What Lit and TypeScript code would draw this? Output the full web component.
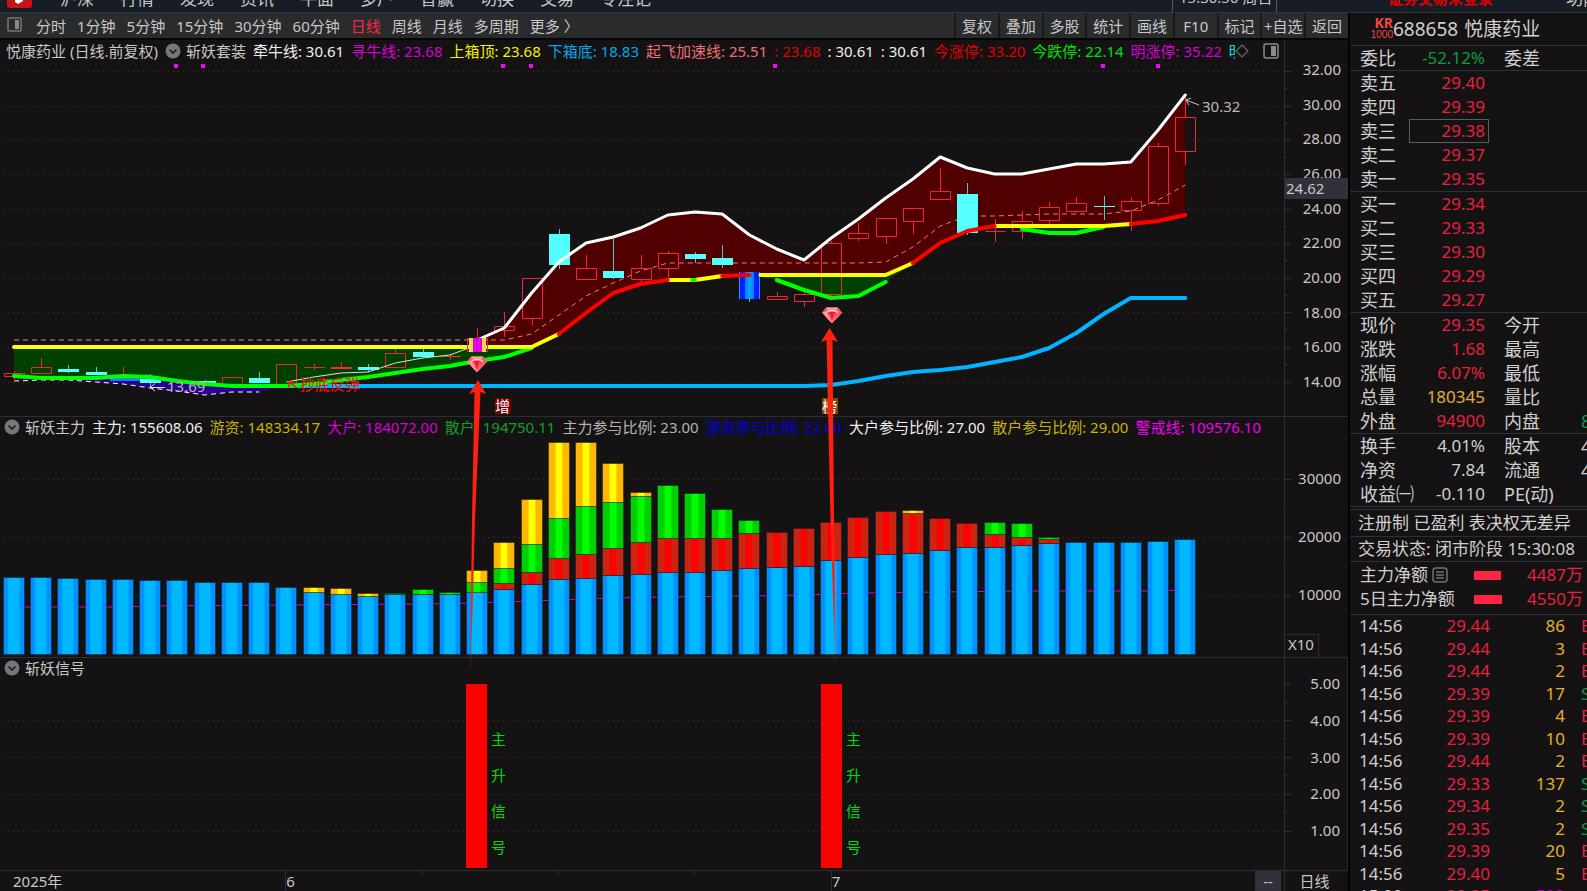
import { LitElement, html, svg, css } from "lit";
import { customElement } from "lit/decorators.js";
import { classMap } from "lit/directives/class-map.js";

type Pt = [number, number];
type Item = [string, string];

const MENU = ["沪深", "行情", "发现", "资讯", "平面", "多户", "智赢", "切换", "交易", "专注记"];
const PERIODS = ["分时", "1分钟", "5分钟", "15分钟", "30分钟", "60分钟", "日线", "周线", "月线", "多周期", "更多 〉"];
const TOOLS = ["复权", "叠加", "多股", "统计", "画线", "F10", "标记", "+自选", "返回"];

const PRICE_INFO: Item[] = [
  ["牵牛线: 30.61", "c-white"], ["寻牛线: 23.68", "c-violet"], ["上箱顶: 23.68", "c-yellow"],
  ["下箱底: 18.83", "c-sky"], ["起飞加速线: 25.51", "c-salmon"], [": 23.68", "c-red"], [": 30.61", "c-white"],
  [": 30.61", "c-white"], ["今涨停: 33.20", "c-red"], ["今跌停: 22.14", "c-lime"], ["明涨停: 35.22", "c-violet"],
];
const VOLUME_INFO: Item[] = [
  ["主力: 155608.06", "c-white"], ["游资: 148334.17", "c-gold"], ["大户: 184072.00", "c-violet"],
  ["散户: 194750.11", "c-green"], ["主力参与比例: 23.00", "c-grey"], ["游资参与比例: 22.00", "c-blue"],
  ["大户参与比例: 27.00", "c-white"], ["散户参与比例: 29.00", "c-gold"], ["警戒线: 109576.10", "c-magenta"],
];

/* centre of the k-th trading day */
const X = (k: number) => 14 + 27.24 * k;

/* day, type (r hollow red, s solid red, c cyan), body top, body bottom, wick top, wick bottom */
const CANDLES: [number, string, number, number, number, number][] = [
  [0, "r", 373, 376, 371, 382], [1, "r", 367, 373, 358, 373], [2, "c", 369, 372, 365, 373], [3, "c", 372, 375, 367, 375],
  [4, "r", 376, 376, 367, 376], [5, "c", 379, 383, 374, 388], [7, "c", 381, 383, 380, 383], [8, "r", 377, 384, 377, 384],
  [9, "c", 378, 383, 372, 383], [10, "r", 364, 384, 364, 384], [11, "r", 367, 367, 364, 370], [12, "s", 367, 369, 362, 369],
  [13, "c", 367, 370, 364, 372], [14, "r", 353, 367, 348, 367], [15, "c", 352, 357, 348, 358], [16, "s", 356, 357, 354, 360],
  [18, "r", 326, 330, 312, 337], [19, "r", 278, 318, 278, 325], [20, "c", 234, 265, 229, 269], [21, "r", 268, 279, 255, 279],
  [22, "c", 271, 278, 239, 279], [23, "r", 268, 279, 255, 282], [24, "r", 253, 268, 251, 278], [25, "c", 254, 259, 252, 263],
  [26, "c", 258, 265, 245, 268], [28, "r", 296, 299, 292, 299], [29, "r", 294, 301, 292, 307], [30, "r", 243, 294, 241, 298],
  [31, "r", 233, 238, 223, 241], [32, "r", 218, 236, 218, 244], [33, "r", 208, 221, 208, 234], [34, "r", 191, 199, 168, 200],
  [35, "c", 194, 233, 183, 235], [36, "r", 231, 231, 219, 242], [37, "r", 221, 231, 211, 239], [38, "r", 207, 220, 202, 225],
  [39, "r", 203, 211, 197, 213], [40, "c", 206, 207, 196, 220], [41, "r", 201, 210, 197, 231], [42, "r", 146, 203, 143, 206],
  [43, "r", 117, 151, 97, 165],
];

const UPPER: Pt[] = [[17, 340], [18, 328], [19, 293], [20, 262], [21, 243], [22, 237], [23, 228], [24, 215], [25, 212], [26, 214], [27, 235], [28, 249], [29, 260], [30, 238], [31, 219], [32, 198], [33, 179], [34, 157], [35, 168], [36, 174], [37, 174], [38, 169], [39, 164], [40, 164], [41, 162], [42, 130], [43, 95]];
const BASE: Pt[] = [[0, 347], [19, 347], [20, 334], [21, 313], [22, 293], [23, 284], [24, 280], [25, 280], [26, 276], [27, 275], [28, 275], [32, 275], [33, 263], [34, 243], [35, 231], [36, 226], [40, 226], [41, 224], [42, 221], [43, 215]];
const GREEN1: Pt[] = [[0, 376], [1, 378], [3, 378], [4, 376], [5, 377], [6, 381], [7, 384], [8, 386], [10, 386], [11, 384], [12, 380], [13, 377], [14, 373], [15, 369], [16, 366], [17, 361], [18, 357], [19, 348]];
const GREEN2: Pt[] = [[28, 280], [29, 290], [30, 298], [31, 296], [32, 282]];
const GREEN3: Pt[] = [[37, 229], [38, 233], [39, 233], [40, 227]];
const BOTTOM: Pt[] = [[10, 386], [29, 386], [30, 385], [31, 381], [32, 376], [33, 372], [34, 370], [35, 367], [36, 362], [37, 357], [38, 348], [39, 333], [40, 314], [41, 298], [43, 298]];
const MID: Pt[] = [[0, 340], [18, 340], [19, 334], [20, 315], [21, 296], [22, 283], [23, 271], [24, 263], [31, 263], [32, 262], [33, 247], [34, 226], [35, 216], [36, 216], [37, 215], [38, 214], [40, 214], [41, 211], [42, 200], [43, 185]];
const LOW: Pt[] = [[0, 381], [1, 380], [2, 380], [3, 382], [4, 384], [5, 388], [6, 391], [7, 395], [8, 392], [9, 392]];
const THIN: Pt[] = [[10, 382], [11, 377], [12, 373], [13, 372], [14, 363], [15, 358], [16, 355], [17, 345]];

/* tops of the blue, red, green and yellow parts of each bar */
const BARS: number[][] = [
  [578], [578], [579], [580], [580], [581], [581], [583], [583], [583], [588],
  [593, 593, 593, 588], [595, 595, 595, 589], [597, 597, 597, 594], [595, 595, 594], [595, 595, 590], [595, 595, 593],
  [593, 593, 583, 571], [590, 584, 569, 543], [585, 573, 545, 500], [580, 559, 519, 443], [579, 555, 507, 443],
  [576, 549, 503, 464], [575, 543, 497, 493], [573, 539, 486], [573, 539, 494], [571, 539, 510], [569, 534, 521],
  [568, 533], [567, 529], [561, 523], [558, 518], [555, 512], [554, 514, 514, 511], [551, 519], [548, 524],
  [548, 535, 523], [546, 538, 524], [544, 540, 538], [543], [543], [543], [542], [540],
];
const WARN: Pt[] = [[0, 607], [4, 607], [5, 606], [10, 605], [15, 604], [17, 603], [18, 602], [20, 600], [22, 598], [24, 597], [27, 596], [29, 595], [31, 593], [34, 592], [37, 591], [42, 591], [43, 590]];

const line = (pts: Pt[]) => pts.map(([k, y]) => `${X(k).toFixed(1)},${y}`).join(" ");
const part = (pts: Pt[], from: number, to: number) => line(pts.filter(([k]) => k >= from && k <= to));
const area = (top: Pt[], bottom: Pt[]) => `${line(top)} ${line([...bottom].reverse())}`;

const SELLS = [["卖五", "29.40"], ["卖四", "29.39"], ["卖三", "29.38"], ["卖二", "29.37"], ["卖一", "29.35"]];
const BUYS = [["买一", "29.34"], ["买二", "29.33"], ["买三", "29.30"], ["买四", "29.29"], ["买五", "29.27"]];
const STATS = [
  ["现价", "29.35", "up", "今开", "", ""], ["涨跌", "1.68", "up", "最高", "", ""], ["涨幅", "6.07%", "up", "最低", "", ""],
  ["总量", "180345", "vol", "量比", "", ""], ["外盘", "94900", "up", "内盘", "85445", "down"],
];
const FUND = [
  ["换手", "4.01%", "", "股本", "4.50亿", ""], ["净资", "7.84", "", "流通", "4.50亿", ""], ["收益㈠", "-0.110", "", "PE(动)", "", ""],
];
const TRADES = [
  ["14:56", "29.44", "86", "B"], ["14:56", "29.44", "3", "B"], ["14:56", "29.44", "2", "B"], ["14:56", "29.39", "17", "S"],
  ["14:56", "29.39", "4", "B"], ["14:56", "29.39", "10", "B"], ["14:56", "29.44", "2", "B"], ["14:56", "29.33", "137", "S"],
  ["14:56", "29.34", "2", "S"], ["14:56", "29.35", "2", "S"], ["14:56", "29.39", "20", "B"], ["14:56", "29.40", "5", "B"],
  ["15:00", "29.35", "522", ""],
];

const FONT = css`
  font-family: "Noto Sans", "Noto Sans CJK SC", sans-serif;
`;

const palette = css`
  .c-text { color: #c8c8c8; }
  .c-white { color: #f0f0f0; }
  .c-grey { color: #b4b4b4; }
  .c-violet { color: #d400d4; }
  .c-magenta { color: #f000f0; }
  .c-yellow { color: #f0f000; }
  .c-gold { color: #c8b400; }
  .c-sky { color: #00a8ea; }
  .c-salmon { color: #f07070; }
  .c-red { color: #e00000; }
  .c-lime { color: #00e000; }
  .c-green { color: #10a028; }
  .c-blue { color: #0000e0; }
`;

@customElement("chart-panels")
export class ChartPanels extends LitElement {
  static styles = [palette, css`
    :host { display: flex; flex-direction: column; min-height: 0; ${FONT} font-size: 15px; line-height: 20px; color: #c8c8c8; }
    .panel { display: grid; grid-template-columns: minmax(0, 1fr) 64px; min-height: 0; }
    .panel + .panel { box-shadow: inset 0 1px #2b2e36; }
    .price { flex: 376 1 0; }
    .volume { flex: 241 1 0; }
    .signal { flex: 213 1 0; }
    .plot { display: flex; flex-direction: column; min-width: 0; min-height: 0; }
    .info { display: flex; align-items: center; gap: 7px; height: 20px; margin-top: 1px; padding: 0 5px 0 4px; white-space: nowrap; }
    .price .info { height: 22px; margin-top: 0; padding-left: 6px; }
    .title { display: flex; align-items: center; gap: 5px; }
    .fold { display: block; width: 16px; height: 16px; padding: 0; border: 0; background: none; }
    .fold svg, .layout svg { display: block; }
    .clip { width: 9px; overflow: hidden; color: #00e0e0; }
    .spacer { flex: 1; }
    .mark { display: flex; align-items: center; gap: 7px; margin-left: -7px; }
    .layout { display: block; padding: 0; border: 0; background: none; }
    .canvas { display: block; flex: 1; width: 100%; min-height: 0; overflow: visible; pointer-events: none; }
    .price .canvas { position: relative; z-index: 1; }
    .axis { position: relative; display: flex; flex-direction: column; justify-content: space-between; text-align: right; border-left: 1px solid #2b2e36; box-sizing: border-box; }
    .price .axis { padding: 19px 7px 25px 0; }
    .volume .axis { padding: 52px 7px 53px 0; }
    .signal .axis { padding: 16px 7px 30px 0; border-right: 1px solid #2b2e36; }
    .tag { position: absolute; left: 0; right: 0; top: 138px; height: 21px; background: #32313b; text-align: left; padding-left: 1px; }
    .unit { position: absolute; left: 0; bottom: 0; padding: 0 4px 2px 3px; height: 20px; border: 1px solid #2b2e36; border-bottom: 0; border-left: 0; line-height: 18px; }
    .grid { stroke: #35353a; stroke-width: 1; stroke-dasharray: 1 4; }
    .tick { stroke: #2f333c; stroke-width: 1; }
    .up { fill: none; stroke: #f0243f; stroke-width: 1; }
    .solid { fill: #ff2442; }
    .down { fill: #54ffff; }
    .wickdown { stroke: #40d0d0; stroke-width: 1; }
    .thick { fill: none; stroke-width: 4; stroke-linejoin: round; stroke-linecap: round; }
    .white { stroke: #ffffff; stroke-width: 3; }
    .yellow { stroke: #ffff00; }
    .red { stroke: #ff0000; }
    .green { stroke: #00ff00; }
    .sky { stroke: #00b4ff; }
    .dash { fill: none; stroke: #e08080; stroke-width: 1; stroke-dasharray: 5 4; }
    .low { fill: none; stroke: #ffffff; stroke-width: 1; stroke-dasharray: 5 4; }
    .thin { fill: none; stroke: #e0e0e0; stroke-width: 1; }
    .warn { fill: none; stroke: #d000d0; stroke-width: 1; }
    .note { fill: #b8b8b8; }
    .rebound { fill: #ff1010; }
    .badge { fill: #ffffff; }
    .sig { fill: #00dc00; }
    .bar { stroke: #10202c; stroke-width: 1; stroke-opacity: 0.5; }
  `];

  private fold(label: string) {
    return html`<button class="fold" aria-label=${label}>
      <svg width="16" height="16" viewBox="0 0 16 16"><circle cx="8" cy="8" r="7.5" fill="#77777a" /><path d="M4.5 6.5 8 10l3.5-3.5" fill="none" stroke="#1c1c1e" stroke-width="1.6" /></svg>
    </button>`;
  }

  private grid(ys: number[], minor: number) {
    return ys.map((y, i) => svg`
      <line class="grid" x1="3" x2="1282" y1=${y + 0.5} y2=${y + 0.5} />
      <line class="tick" x1="1284" x2="1291" y1=${y + 0.5} y2=${y + 0.5} />
      ${i < ys.length - 1 ? svg`<line class="tick" x1="1284" x2="1287" y1=${y + minor} y2=${y + minor} />` : null}`);
  }

  private candle([k, type, top, bottom, high, low]: [number, string, number, number, number, number]) {
    const x = Math.round(X(k)) + 0.5;
    if (type === "c") {
      return svg`<line class="wickdown" x1=${x} x2=${x} y1=${high} y2=${low} /><rect class="down" x=${x - 10.5} y=${top} width="21" height=${bottom - top} />`;
    }
    if (type === "s") {
      return svg`<line class="up" x1=${x} x2=${x} y1=${high} y2=${low} /><rect class="solid" x=${x - 10.5} y=${top} width="21" height=${bottom - top} />`;
    }
    return svg`<path class="up" d="M${x} ${high}V${top}M${x} ${bottom}V${low}M${x - 10} ${top + 0.5}H${x + 10}V${bottom + 0.5}H${x - 10}Z" />`;
  }

  private gem(cx: number, top: number) {
    return svg`<g transform="translate(${cx} ${top})">
      <path d="M-6-.5H6L10 4.5 0 15.500-10 4.500Z" fill="#ff5a64" />
      <path d="M-6-.5H6L4 2.500H-4ZM-10 4.500-5 4 0 15.500Z" fill="#ff9c9c" />
      <path d="M-4.500 3.500 0 2.500 4.500 3.500 0 14Z" fill="#f01830" />
      <path d="M-6 4.500-3 3 0 2.500 3 3 6 4.500" fill="none" stroke="#ffdcdc" stroke-width="1.300" />
      <path d="M-3 4.500 0 14 3 4.500M10 4.500 0 15" fill="none" stroke="#ff7a80" stroke-width=".8" />
    </g>`;
  }

  private price() {
    const c = Math.round(X(17)) + 0.5, b = Math.round(X(27)) + 0.5;
    return svg`<svg class="canvas" viewBox="0 62 1284 354" preserveAspectRatio="xMinYMin meet">
      <defs>
        <linearGradient id="fade" x1="0" x2="0" y1="0" y2="1">
          <stop offset="0" stop-color="#ff2010" /><stop offset=".8" stop-color="#ff2010" /><stop offset="1" stop-color="#ff2010" stop-opacity=".25" />
        </linearGradient>
        <linearGradient id="hot">
          <stop offset="0" stop-color="#e6dc50" /><stop offset=".22" stop-color="#e6dc50" /><stop offset=".22" stop-color="#e000c0" /><stop offset=".4" stop-color="#ff00ff" /><stop offset=".46" stop-color="#9000c0" /><stop offset=".54" stop-color="#ff00ff" /><stop offset=".74" stop-color="#e000c0" /><stop offset=".74" stop-color="#e6dc50" /><stop offset="1" stop-color="#e6dc50" />
        </linearGradient>
        <linearGradient id="cold">
          <stop offset="0" stop-color="#40e0ff" /><stop offset=".06" stop-color="#0020ff" /><stop offset=".28" stop-color="#0020ff" /><stop offset=".3" stop-color="#0080ff" /><stop offset=".5" stop-color="#00a8ff" /><stop offset=".7" stop-color="#0080ff" /><stop offset=".72" stop-color="#0020ff" /><stop offset=".94" stop-color="#0020ff" /><stop offset="1" stop-color="#40e0ff" />
        </linearGradient>
      </defs>
      ${this.grid([71, 106, 140, 174, 209, 243, 278, 312, 347, 382], 17.5)}
      ${[176, 203, 503, 531, 775, 1103, 1158].map((x) => svg`<rect x=${x - 2} y="64" width="4" height="4" fill="#ff00ff" />`)}
      <polygon fill="#500000" points=${area(UPPER, [[17, 347], ...BASE.slice(1)])} />
      <polygon fill="#004000" points=${area([[0, 347], [19, 347]], GREEN1)} />
      <polygon fill="#004000" points=${area([[27, 275], [32, 275], [33, 263]], GREEN2)} />
      <polygon fill="#004000" points=${area([[36.5, 226], [40, 226]], GREEN3)} />
      <polygon fill="#2c0090" points=${area([[1, 379], [3, 379], [4, 377], [5, 377], [6, 381], [7, 384], [8, 386], [10, 386]], LOW.slice(1))} />
      <rect x="110" y="378" width="32" height="3" fill="#1484f0" />
      <polyline class="dash" points=${line(MID)} />
      <polyline class="low" points=${line(LOW)} />
      <polyline class="thick sky" points=${line(BOTTOM)} />
      ${CANDLES.map((d) => this.candle(d))}
      <rect x=${b - 10.5} y="272" width="21" height="27" fill="url(#cold)" />
      <line class="wickdown" x1=${b} x2=${b} y1="299" y2="302" />
      <polyline class="thick green" points=${line(GREEN1)} />
      <polyline class="thick green" points=${line(GREEN2)} />
      <polyline class="thick green" points=${line(GREEN3)} />
      <polyline class="thick yellow" points=${part(BASE, 0, 20)} />
      <polyline class="thick yellow" points=${part(BASE, 24, 26)} />
      <polyline class="thick yellow" points=${line([[27.4, 275], [32, 275], [33, 263]])} />
      <polyline class="thick yellow" points=${part(BASE, 36, 41)} />
      <polyline class="thick red" points=${part(BASE, 20, 24)} />
      <polyline class="thick red" points=${part(BASE, 26, 27)} />
      <polyline class="thick red" points=${part(BASE, 33, 36)} />
      <polyline class="thick red" points=${part(BASE, 41, 43)} />
      <path class="thick green" d="M692 280h3" />
      <polyline class="thin" points=${line(THIN)} />
      <polyline class="thick white" points=${line(UPPER)} />
      <line class="up" x1=${c} x2=${c} y1="328" y2="338" />
      <rect class="up" x=${c - 10} y="338.500" width="20" height="13" />
      <rect x=${c - 8.5} y="338" width="17" height="14" fill="url(#hot)" />
      ${this.gem(477, 357)} ${this.gem(832, 308)}
      <path d="M165 387.500H150M155 383.500 150 387.500 155 391" fill="none" stroke="#d0d0d0" />
      <text class="note" x="167" y="392">13.69</text>
      <path d="M297 388 289 382M289 387V382H295" fill="none" stroke="#ff1010" stroke-width="1.500" />
      <text class="rebound" x="300" y="390">抄底反弹</text>
      <path d="M1199 105 1186 100M1191 98 1186 100 1189 105" fill="none" stroke="#c8c8c8" />
      <text class="note" x="1202" y="112">30.32</text>
      <rect x="495" y="398" width="16" height="16" fill="#780000" /><text class="badge" x="495" y="412">增</text>
      <rect x="822" y="398" width="16" height="16" fill="#8a4600" /><text class="badge" x="822" y="412">榜</text>
      <path fill="url(#fade)" d="M478 380 486 394 480.500 392 475 520 470.900 669H470.100L472 520 474.500 392 469 394Z" />
      <path fill="url(#fade)" d="M829.500 328 838 342 832.500 340 834 520 835.900 662H835.100L830.500 520 826.500 340 821 342Z" />
    </svg>`;
  }

  private volume() {
    const fills = ["url(#b)", "url(#r)", "url(#g)", "url(#y)"];
    const stops: Record<string, [string, string]> = { b: ["#0090ff", "#00b8ff"], r: ["#cc2410", "#ff0000"], g: ["#00d000", "#00ff00"], y: ["#ffb800", "#ffff00"] };
    return svg`<svg class="canvas" viewBox="0 437 1284 220" preserveAspectRatio="xMinYMin meet">
      <defs>${Object.entries(stops).map(([id, [edge, mid]]) => {
        const [s, e] = id === "b" ? [0.18, 0.72] : [0.3, 0.62];
        return svg`<linearGradient id=${id}>
          <stop offset=${s} stop-color=${edge} /><stop offset=${s + 0.08} stop-color=${mid} /><stop offset=${e} stop-color=${mid} /><stop offset=${e + 0.08} stop-color=${edge} />
        </linearGradient>`;
      })}</defs>
      ${this.grid([479, 537, 596], 29)}
      <polyline class="warn" points=${line(WARN)} />
      ${BARS.map((tops, k) => tops.map((top, i) => {
        const bottom = i ? tops[i - 1] : 655;
        return bottom > top ? svg`<rect class="bar" x=${Math.round(X(k)) - 10.5} y=${top - 0.5} width="21" height=${bottom - top} fill=${fills[i]} />` : null;
      }))}
    </svg>`;
  }

  private signal() {
    return svg`<svg class="canvas" viewBox="0 678 1284 192" preserveAspectRatio="xMinYMin meet">
      ${this.grid([720, 757, 794, 831], 18.5)}
      <line class="tick" x1="1284" x2="1291" y1="684.5" y2="684.5" /><line class="tick" x1="1284" x2="1287" y1="702.5" y2="702.5" />
      ${[466, 821].map((x) => svg`<rect x=${x} y="684" width="21" height="184" fill="#ff0000" />
        ${["主", "升", "信", "号"].map((ch, i) => svg`<text class="sig" x=${x + 25} y=${745 + i * 36}>${ch}</text>`)}`)}
    </svg>`;
  }

  private items(list: Item[]) {
    return list.map(([t, c]) => html`<span class=${c}>${t}</span>`);
  }

  render() {
    return html`
      <section class="panel price">
        <div class="plot">
          <div class="info">
            <span>悦康药业 (日线.前复权)</span>
            <span class="title">${this.fold("斩妖套装")}<span>斩妖套装</span></span>
            ${this.items(PRICE_INFO)}
            <span class="clip">明</span>
            <span class="mark"><svg width="14" height="14" viewBox="0 0 14 14"><path d="M7 1 13 7 7 13 1 7Z" fill="none" stroke="#6a6a6c" stroke-width="1.2" /></svg></span>
            <span class="spacer"></span>
            <button class="layout" aria-label="布局"><svg width="16" height="16" viewBox="0 0 16 16"><rect x="1" y="1" width="14" height="14" rx="2" fill="none" stroke="#8a8a8c" stroke-width="1.5" /><rect x="8" y="3" width="5" height="10" fill="#8a8a8c" /></svg></button>
          </div>
          ${this.price()}
        </div>
        <div class="axis">${["32.00", "30.00", "28.00", "26.00", "24.00", "22.00", "20.00", "18.00", "16.00", "14.00"].map((v) => html`<span>${v}</span>`)}<span class="tag">24.62</span></div>
      </section>
      <section class="panel volume">
        <div class="plot">
          <div class="info"><span class="title">${this.fold("斩妖主力")}<span>斩妖主力</span></span>${this.items(VOLUME_INFO)}</div>
          ${this.volume()}
        </div>
        <div class="axis">${["30000", "20000", "10000"].map((v) => html`<span>${v}</span>`)}<span class="unit">X10</span></div>
      </section>
      <section class="panel signal">
        <div class="plot">
          <div class="info"><span class="title">${this.fold("斩妖信号")}<span>斩妖信号</span></span></div>
          ${this.signal()}
        </div>
        <div class="axis">${["5.00", "4.00", "3.00", "2.00", "1.00"].map((v) => html`<span>${v}</span>`)}</div>
      </section>`;
  }
}

@customElement("quote-panel")
export class QuotePanel extends LitElement {
  static styles = css`
    :host { display: block; overflow: hidden; background: #141213; ${FONT} font-size: 18px; line-height: 24px; color: #cfcfcf; }
    .head { display: flex; align-items: center; height: 32px; padding-left: 20px; border-bottom: 1px solid #2e3038; font-size: 19px; white-space: nowrap; }
    .flags { width: 23px; text-align: right; color: #f04848; font-size: 14px; line-height: 12px; }
    .flags b { display: block; }
    .flags small { display: block; font-family: "Liberation Sans", sans-serif; font-size: 10px; line-height: 12px; }
    .name { margin-left: 6px; }
    table { table-layout: fixed; border-collapse: collapse; width: 320px; border-bottom: 1px solid #2e3038; }
    td, th { height: 24px; padding: 0; font-weight: normal; text-align: left; white-space: nowrap; }
    th { padding-left: 10px; }
    .lab { width: 59px; }
    .val { width: 80px; }
    .lab2 { width: 92px; }
    .num { text-align: right; font-size: 17px; }
    .num span { display: block; line-height: 22px; padding-right: 3px; border: 1px solid transparent; }
    .num .picked { border-color: #5c5c60; }
    .next { padding-left: 15px; }
    .up { color: #e8213c; }
    .down { color: #109a40; }
    .vol { color: #e0b030; }
    .purple { color: #a000b0; }
    .last { border-bottom: 4px double #2e3038; }
    .line { padding-left: 8px; height: 26px; line-height: 26px; font-size: 17px; border-bottom: 1px solid #2e3038; white-space: nowrap; }
    .line.low { height: 24px; line-height: 24px; }
    .flow { padding: 1px 4px 3px 10px; border-bottom: 1px solid #2e3038; font-size: 17px; }
    .row { display: grid; grid-template-columns: 114px 1fr auto; align-items: center; white-space: nowrap; }
    .row > span:first-child { display: flex; align-items: center; gap: 4px; }
    .meter { height: 9px; background: #ff2442; }
    .trades { border: 0; font-size: 17px; line-height: 22px; }
    .trades td { height: 22px; }
    .trades tr:nth-child(even) td { height: 23px; }
    .trades td:first-child { padding-left: 9px; }
    .time { width: 70px; }
    .deal { width: 70px; }
    .qty { width: 75px; }
    .right { text-align: right; }
    .side { padding-left: 16px; }
  `;

  private book(rows: string[][]) {
    return html`<table><colgroup><col class="lab" /><col class="val" /><col /></colgroup>
      <tbody>${rows.map(([l, v]) => html`<tr><th scope="row">${l}</th><td class="num up"><span class=${classMap({ picked: v === "29.38" })}>${v}</span></td><td></td></tr>`)}</tbody></table>`;
  }

  private stats(rows: string[][], last = false) {
    return html`<table class=${classMap({ last })}><colgroup><col class="lab" /><col class="val" /><col class="lab2" /><col /></colgroup>
      <tbody>${rows.map(([l, v, c, l2, v2, c2]) => html`<tr><th scope="row">${l}</th><td class="num ${c}"><span>${v}</span></td><td class="next">${l2}</td><td class=${c2}>${v2}</td></tr>`)}</tbody></table>`;
  }

  render() {
    return html`
      <div class="head"><span class="flags"><b>KR</b><small>1000</small></span><span>688658</span><span class="name">悦康药业</span></div>
      ${this.stats([["委比", "-52.12%", "down", "委差", "", ""]])}
      ${this.book(SELLS)} ${this.book(BUYS)} ${this.stats(STATS)} ${this.stats(FUND, true)}
      <div class="line">注册制 已盈利 表决权无差异</div>
      <div class="line low">交易状态: 闭市阶段 15:30:08</div>
      <div class="flow">
        <div class="row"><span>主力净额<svg width="16" height="16" viewBox="0 0 16 16"><rect x="1" y="1" width="14" height="14" rx="3" fill="none" stroke="#707072" stroke-width="1.5" /><path d="M4 5h8M4 8h8M4 11h8" stroke="#707072" stroke-width="1.300" /></svg></span><span class="meter" style="width:27px"></span><span class="up">4487万</span></div>
        <div class="row"><span>5日主力净额</span><span class="meter" style="width:28px"></span><span class="up">4550万</span></div>
      </div>
      <table class="trades"><colgroup><col class="time" /><col class="deal" /><col class="qty" /><col /></colgroup>
        <tbody>${TRADES.map(([t, p, q, s]) => html`<tr><td>${t}</td><td class="up right">${p}</td><td class="right ${s ? "vol" : "purple"}">${q}</td><td class="side ${s === "S" ? "down" : "up"}">${s}</td></tr>`)}</tbody>
      </table>`;
  }
}

@customElement("app-root")
export class AppRoot extends LitElement {
  static styles = css`
    :host { display: grid; grid-template-columns: minmax(0, 1fr) 239px; grid-template-rows: 13px minmax(0, 1fr); height: 100vh; overflow: hidden; background: #141213; ${FONT} font-size: 15px; line-height: 20px; color: #c8c8c8; }
    button { font: inherit; color: inherit; border: 0; padding: 0; background: none; white-space: nowrap; }
    .top { grid-column: 1 / -1; display: flex; align-items: flex-end; height: 12px; overflow: hidden; background: #171d26; border-bottom: 1px solid #30343d; }
    .logo { display: block; margin-left: 7px; margin-bottom: 4px; }
    .menu { display: flex; gap: 26px; margin-left: 28px; padding-bottom: 3px; font-size: 17px; flex: 1; }
    .clock { height: 12px; display: flex; align-items: flex-end; width: 105px; box-sizing: border-box; border: solid #55585f; border-width: 0 1px; padding: 0 0 5px 6px; white-space: nowrap; }
    .login { margin-left: 111px; padding-bottom: 4px; color: #e00000; font-weight: bold; }
    .skill { margin-left: 73px; width: 21px; overflow: hidden; white-space: nowrap; padding-bottom: 3px; font-size: 17px; }
    .main { display: flex; flex-direction: column; min-width: 0; min-height: 0; }
    .bar { display: flex; align-items: center; height: 25px; border-bottom: 2px solid #050505; background: #2a2b2d; }
    .side { display: block; margin: 0 14px 0 7px; }
    .periods { display: flex; gap: 11px; flex: 1; }
    .on { color: #ff2442; }
    .tools { display: grid; grid-template-columns: repeat(9, minmax(0, 1fr)); width: 394px; height: 100%; }
    .tools button { border-left: 2px solid #18181a; overflow: hidden; }
    chart-panels { flex: 1; }
    .foot { display: grid; grid-template-columns: minmax(0, 1fr) 26px 3px 64px; height: 20px; border-top: 1px solid #2b2e36; }
    .dates { display: grid; grid-template-columns: 285fr 545fr 424fr; }
    .dates span { border-left: 1px solid #2b2e36; background: linear-gradient(#2b2e36, #2b2e36) 25% 0 / 1px 4px no-repeat, linear-gradient(#2b2e36, #2b2e36) 50% 0 / 1px 4px no-repeat, linear-gradient(#2b2e36, #2b2e36) 75% 0 / 1px 4px no-repeat; }
    .dates .year { padding-left: 13px; border: 0; background: none; }
    .dates .month { background: none; }
    .dash { background: #32313b; text-align: center; }
    .mode { grid-column: 4; padding-right: 4px; text-align: center; border-left: 1px solid #2b2e36; }
    quote-panel { border-left: 2px solid #000; }
  `;

  render() {
    return html`
      <header class="top">
        <svg class="logo" width="25" height="20" viewBox="0 0 25 20"><rect width="25" height="20" rx="3" fill="#c81414" /><path d="M8 8h8v5l-5 3-3-2Z" fill="#fff" /></svg>
        <nav class="menu">${MENU.map((m) => html`<button>${m}</button>`)}</nav>
        <span class="clock">15:30:50 周日</span>
        <span class="login">证券交易未登录</span>
        <span class="skill">功能</span>
      </header>
      <main class="main">
        <div class="bar">
          <button class="side" aria-label="侧栏"><svg width="15" height="15" viewBox="0 0 15 15"><rect x="1" y="1" width="13" height="13" rx="1" fill="none" stroke="#77787a" stroke-width="1.5" /><rect x="8" y="3" width="4" height="9" fill="#8a8a8c" /></svg></button>
          <nav class="periods">${PERIODS.map((p) => html`<button class=${classMap({ on: p === "日线" })}>${p}</button>`)}</nav>
          <div class="tools">${TOOLS.map((t) => html`<button>${t}</button>`)}</div>
        </div>
        <chart-panels></chart-panels>
        <footer class="foot">
          <div class="dates"><span class="year">2025年</span><span>6</span><span class="month">7</span></div>
          <span class="dash">--</span><span class="mode">日线</span>
        </footer>
      </main>
      <quote-panel></quote-panel>`;
  }
}
